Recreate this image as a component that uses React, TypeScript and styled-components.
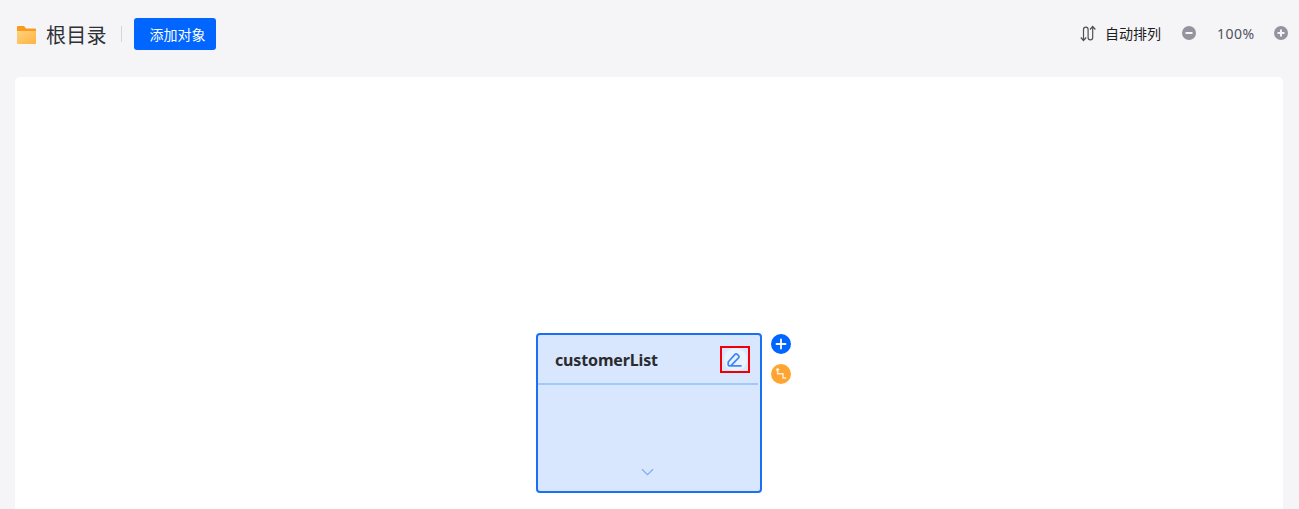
import { createGlobalStyle, styled } from "styled-components";

const GlobalStyle = createGlobalStyle`
  html, body {
    margin: 0;
    height: 100%;
    overflow: hidden;
    background: #f5f5f8;
    font-family: "Noto Sans", "Noto Sans CJK SC", sans-serif;
  }
`;

const Page = styled.div`
  display: flex;
  flex-direction: column;
  height: 509px;
  padding: 0 16px 0 15px;
  overflow: hidden;
`;

const Toolbar = styled.header`
  display: flex;
  align-items: center;
  justify-content: space-between;
  height: 77px;
  flex-shrink: 0;
  margin-right: -5px;
  padding: 0 0 9px 2px;
  box-sizing: border-box;
`;

const ToolGroup = styled.div<{ $lift?: number }>`
  display: flex;
  align-items: center;
  margin-bottom: ${(p) => p.$lift ?? 0}px;
`;

const PageTitle = styled.h1`
  margin: 1px 14px 0 10px;
  font-size: 20px;
  line-height: 28px;
  font-weight: 400;
  letter-spacing: 0.3px;
  color: #2f3136;
  font-family: "Noto Sans CJK SC", sans-serif;
`;

const Divider = styled.span`
  width: 1px;
  height: 16px;
  margin-right: 12px;
  background: #d4d5d9;
`;

const AddButton = styled.button`
  width: 82px;
  height: 32px;
  border: 0;
  border-radius: 3px;
  padding: 0 0 0 5px;
  background: #0066ff;
  color: #fff;
  font-size: 14px;
  line-height: 20px;
  font-family: "Noto Sans CJK SC", sans-serif;
`;

const AutoLabel = styled.span`
  margin: 0 21px 0 8px;
  font-size: 14px;
  line-height: 20px;
  color: #1c1d21;
  font-family: "Noto Sans CJK SC", sans-serif;
`;

const ZoomValue = styled.span`
  width: 37px;
  margin: 0 20px 0 21px;
  text-align: center;
  font-size: 14px;
  letter-spacing: 0.5px;
  color: #50525a;
  white-space: nowrap;
`;

const Canvas = styled.main`
  position: relative;
  flex: 1;
  background: #fff;
  border-radius: 5px 5px 0 0;
`;

const NodeCard = styled.section`
  position: absolute;
  left: 521px;
  top: 256px;
  display: flex;
  flex-direction: column;
  width: 226px;
  height: 160px;
  box-sizing: border-box;
  border: 2px solid #1a6ff5;
  border-radius: 4px;
  background: #d8e7fe;
`;

const NodeHead = styled.div`
  display: flex;
  align-items: center;
  justify-content: space-between;
  height: 48px;
  margin-right: 2px;
  padding: 0 8px 0 17px;
  border-bottom: 2px solid #a3c9fb;
`;

const NodeName = styled.span`
  margin-top: 2px;
  font-size: 16px;
  font-weight: 700;
  letter-spacing: -0.15px;
  color: #2b2b2e;
`;

const EditOutline = styled.button`
  display: flex;
  align-items: center;
  justify-content: center;
  width: 30px;
  height: 27px;
  box-sizing: border-box;
  padding: 0;
  border: 2px solid #f00006;
  background: transparent;
`;

const EditCircle = styled.span`
  display: flex;
  align-items: center;
  justify-content: center;
  width: 23px;
  height: 23px;
  box-sizing: border-box;
  padding-right: 2px;
  border-radius: 50%;
  background: #eaf2ff;
`;

const NodeBody = styled.div`
  flex: 1;
  display: flex;
  align-items: flex-end;
  justify-content: center;
  padding: 0 3px 15px 0;
`;

const SideButton = styled.button<{ $color: string; $top: number }>`
  position: absolute;
  left: 756px;
  top: ${(p) => p.$top}px;
  display: flex;
  align-items: center;
  justify-content: center;
  width: 20px;
  height: 20px;
  padding: 0;
  border: 0;
  border-radius: 50%;
  background: ${(p) => p.$color};
`;

const FolderIcon = () => (
  <svg width="19" height="19" viewBox="0 0 19 19">
    <defs>
      <linearGradient id="folderFront" x1="0" y1="0" x2="1" y2="1">
        <stop offset="0" stopColor="#ffd27f" />
        <stop offset="1" stopColor="#ffb23f" />
      </linearGradient>
    </defs>
    <path d="M1 1h6l2 2.500h9a1 1 0 0 1 1 1V7H0V2a1 1 0 0 1 1-1z" fill="#fb9a1d" />
    <path d="M0 6h19v12a1 1 0 0 1-1 1H1a1 1 0 0 1-1-1z" fill="url(#folderFront)" />
  </svg>
);

const ArrangeIcon = () => (
  <svg width="17" height="17" viewBox="0 0 17 17" fill="none" stroke="#4f5157" strokeWidth="1.200">
    <path d="M.8 12.500l2.700 3 2.700-3M3.500 15V4.500a2.300 2.300 0 0 1 4.600 0v8a2.300 2.300 0 0 0 4.600 0V2M10 4.500l2.700-3 2.700 3" />
  </svg>
);

const ZoomIcon = ({ plus }: { plus?: boolean }) => (
  <svg width="14" height="14" viewBox="0 0 14 14">
    <circle cx="7" cy="7" r="7" fill="#94949f" />
    <path d={plus ? "M3.500 7h7M7 3.500v7" : "M3.500 7h7"} stroke="#f5f5f8" strokeWidth="2" />
  </svg>
);

const PenIcon = () => (
  <svg width="17" height="17" viewBox="0 0 17 17" fill="none" stroke="#3f85f8" strokeWidth="1.700">
    <path
      d="M15 14.800H3.200a1 1 0 0 1-1-1V11L9 3.400a1.600 1.600 0 0 1 2.300 0l1.200 1.200a1.600 1.600 0 0 1 0 2.300l-7.500 7.700"
      strokeLinecap="round"
      strokeLinejoin="round"
    />
  </svg>
);

const ChevronIcon = () => (
  <svg width="13" height="8" viewBox="0 0 13 8" fill="none" stroke="#7eaefa" strokeWidth="1.300">
    <path d="M1 1.200l5.500 5.500L12 1.200" />
  </svg>
);

const PlusIcon = () => (
  <svg width="12" height="12" viewBox="0 0 12 12" stroke="#fff" strokeWidth="1.800" strokeLinecap="round">
    <path d="M1.500 6h9M6 1.500v9" />
  </svg>
);

const RouteIcon = () => (
  <svg width="14" height="14" viewBox="0 0 14 14" fill="none" stroke="#ffeeda" strokeWidth="1.400">
    <path d="M2 3.300l1.600-1.600 1.600 1.600M3.600 2v4.800H9v4.200h3.200" />
  </svg>
);

export default function App() {
  return (
    <>
      <GlobalStyle />
      <Page>
        <Toolbar>
          <ToolGroup>
            <FolderIcon />
            <PageTitle>根目录</PageTitle>
            <Divider />
            <AddButton>添加对象</AddButton>
          </ToolGroup>
          <ToolGroup $lift={2}>
            <ArrangeIcon />
            <AutoLabel>自动排列</AutoLabel>
            <ZoomIcon />
            <ZoomValue>100%</ZoomValue>
            <ZoomIcon plus />
          </ToolGroup>
        </Toolbar>
        <Canvas>
          <NodeCard>
            <NodeHead>
              <NodeName>customerList</NodeName>
              <EditOutline>
                <EditCircle>
                  <PenIcon />
                </EditCircle>
              </EditOutline>
            </NodeHead>
            <NodeBody>
              <ChevronIcon />
            </NodeBody>
          </NodeCard>
          <SideButton $color="#0066ff" $top={257}>
            <PlusIcon />
          </SideButton>
          <SideButton $color="#ffa430" $top={287}>
            <RouteIcon />
          </SideButton>
        </Canvas>
      </Page>
    </>
  );
}
